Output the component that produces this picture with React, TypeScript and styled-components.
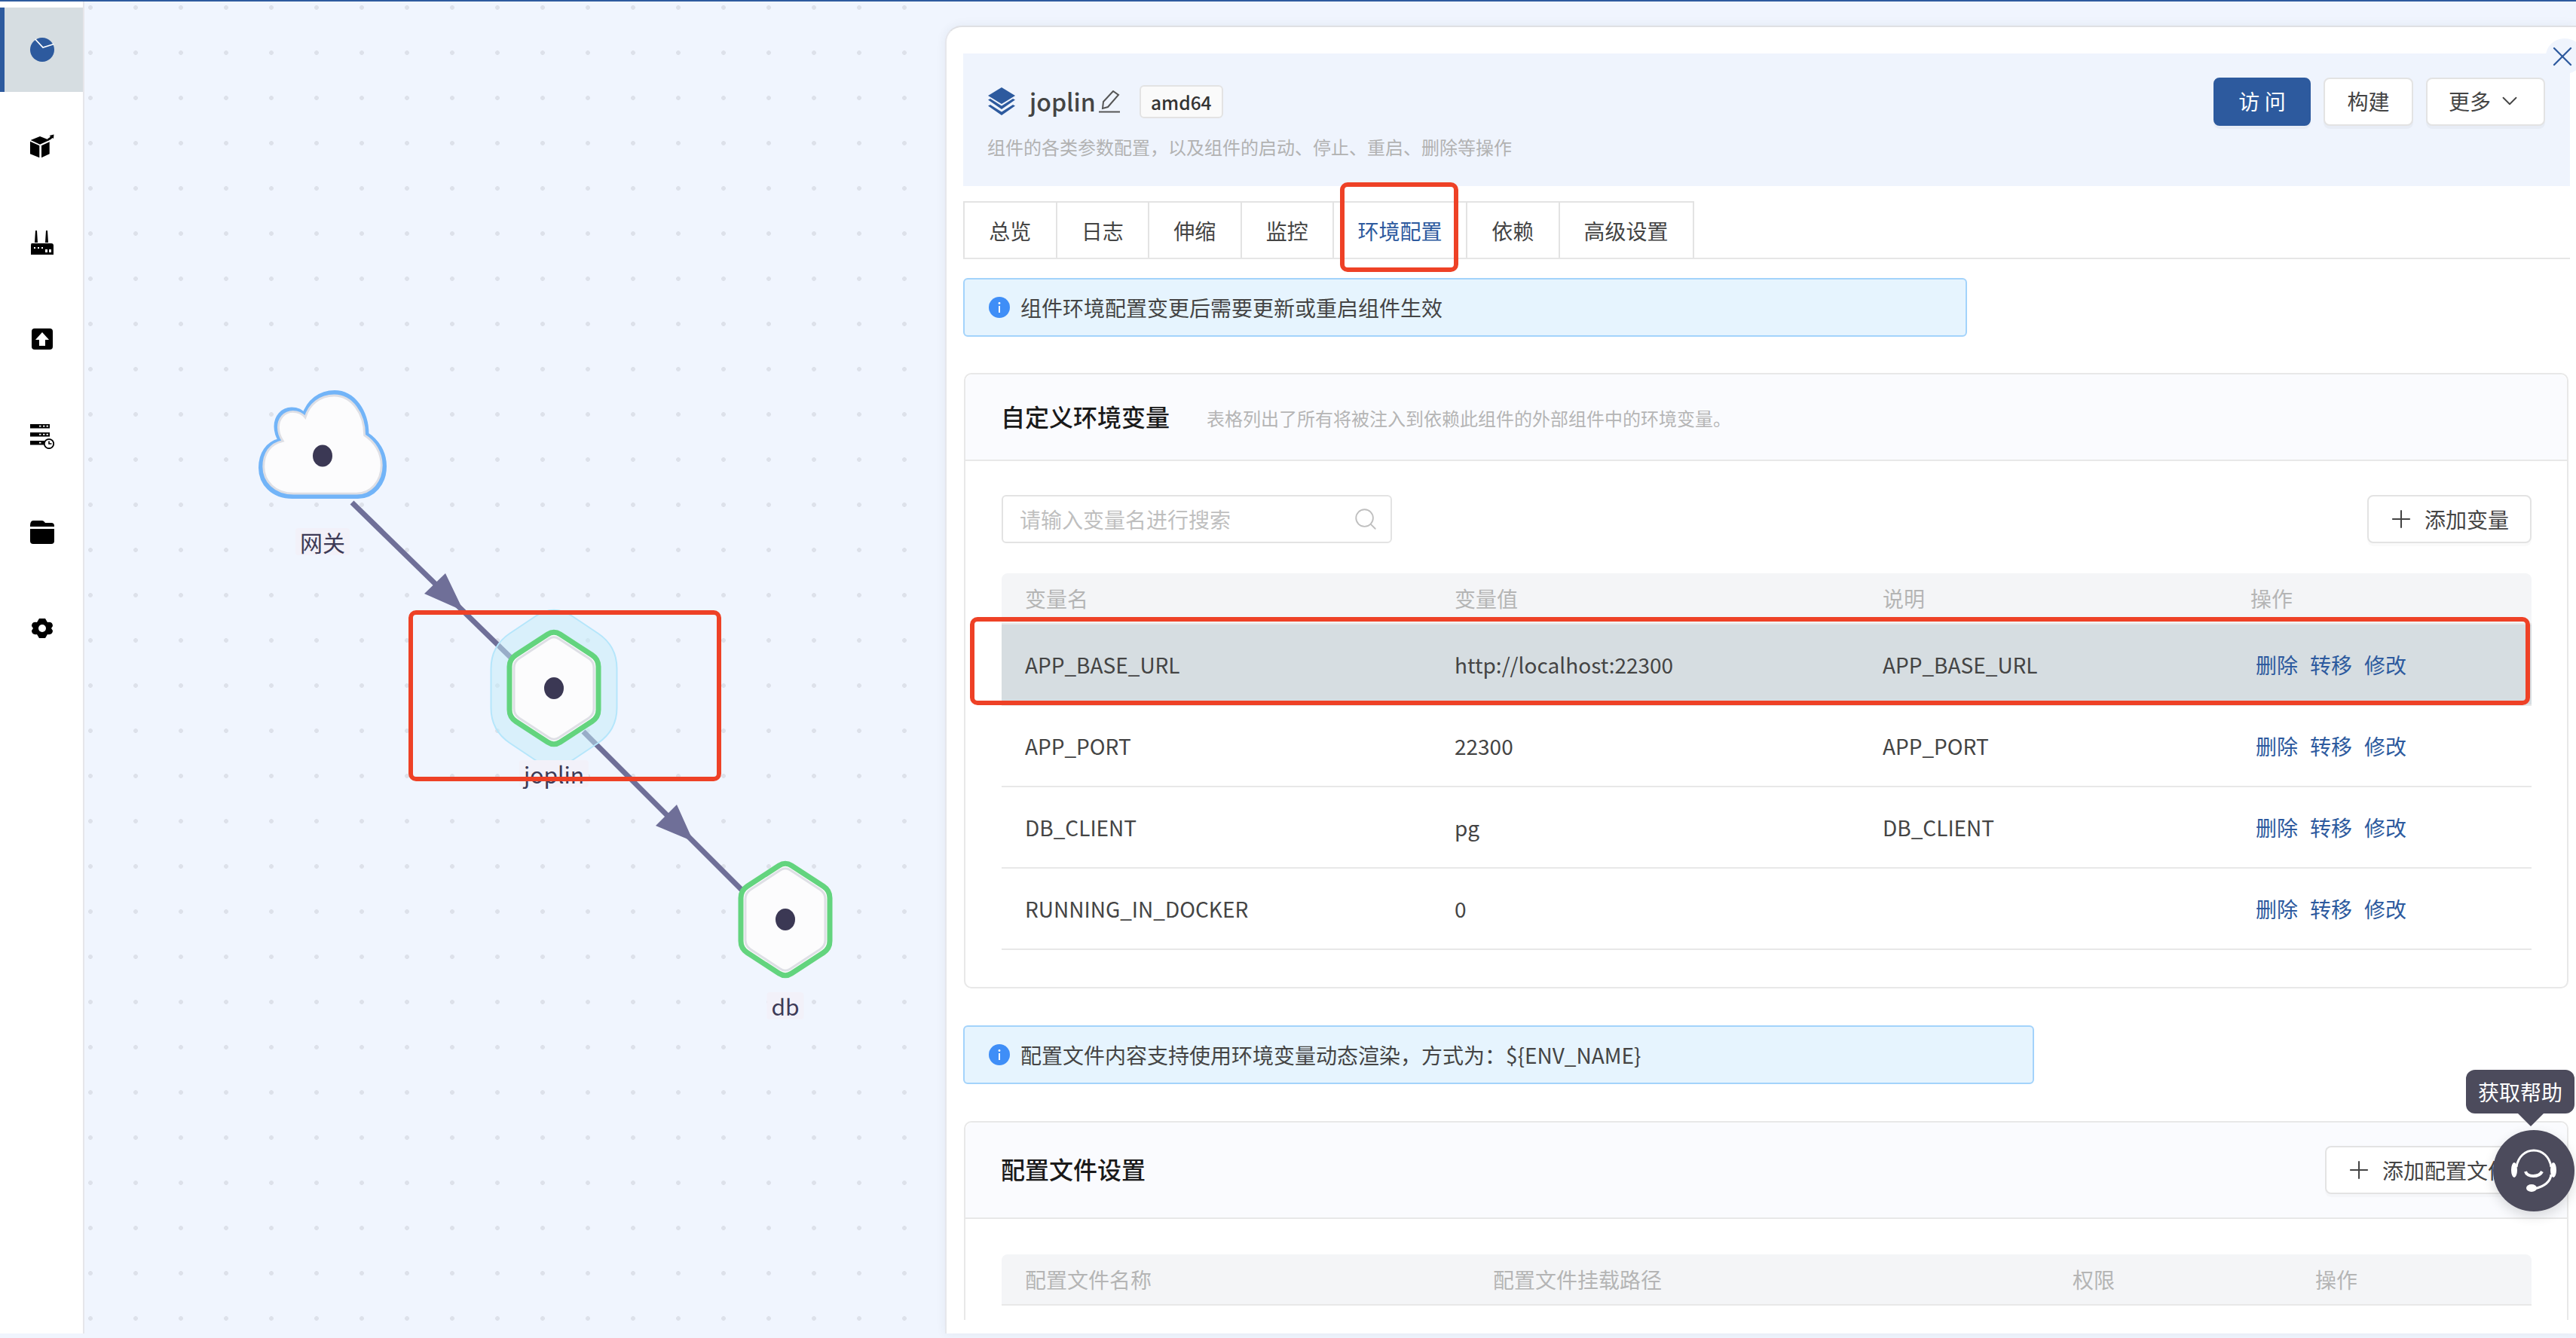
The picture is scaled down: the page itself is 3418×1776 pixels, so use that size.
import styled, { createGlobalStyle } from 'styled-components';
import { Search, Plus, ChevronDown, X } from 'lucide-react';

const FONT = '"Noto Sans CJK SC", "Noto Sans", sans-serif';
const BLUE = '#2d5a9e';

const GlobalStyle = createGlobalStyle`
  html, body { margin: 0; padding: 0; background: #f0f5fe; }
  body { font-family: ${FONT}; color: #444; }
  * { box-sizing: border-box; }
`;

const Page = styled.div`
  position: relative;
  width: 3418px;
  height: 1776px;
  overflow: hidden;
  display: flex;
  flex-direction: column;
  background: #f0f5fe;
`;

const TopLine = styled.div`
  height: 2px;
  flex-shrink: 0;
  background: ${BLUE};
`;

const Main = styled.div`
  flex: 1;
  display: flex;
  min-height: 0;
`;

const Sidebar = styled.nav`
  width: 112px;
  flex-shrink: 0;
  height: 1768px;
  padding-top: 8px;
  background: #fff;
  border-right: 2px solid #e6e6ea;
  display: flex;
  flex-direction: column;
  gap: 16px;
`;

const NavItem = styled.div<{ $active?: boolean }>`
  height: 112px;
  display: flex;
  align-items: center;
  justify-content: center;
  padding-right: 4px;
  background: ${(p) => (p.$active ? '#d6dde1' : 'transparent')};
  border-left: 6px solid ${(p) => (p.$active ? BLUE : 'transparent')};
  color: ${(p) => (p.$active ? BLUE : '#000')};
`;

const Canvas = styled.div`
  position: relative;
  flex: 1;
  background-image: radial-gradient(circle at center, #dde1ea 2.6px, transparent 3.2px);
  background-size: 60px 60px;
  background-position: 38px -22px;
`;

const GraphSvg = styled.svg`
  position: absolute;
  left: 0;
  top: 0;
  width: 100%;
  height: 100%;
  overflow: visible;
`;

const NodeLabel = styled.div<{ $x: number; $y: number }>`
  position: absolute;
  left: ${(p) => p.$x - 112}px;
  top: ${(p) => p.$y - 2}px;
  transform: translateX(-50%);
  height: 36px;
  padding: 0 6px;
  border-radius: 4px;
  background: #f2f1f9;
  color: #3d3a56;
  font-size: 30px;
  line-height: 36px;
`;

const Panel = styled.section`
  width: 2164px;
  height: 1736px;
  margin-top: 32px;
  flex-shrink: 0;
  padding: 35px 8px 18px 22px;
  background: #fff;
  border-top: 2px solid #dfe0e4;
  border-left: 2px solid #e6e7ec;
  border-top-left-radius: 22px;
  box-shadow: 0 0 14px rgba(40, 50, 80, 0.07);
`;

const PanelBody = styled.div`
  height: 100%;
  overflow: hidden;
`;

const Header = styled.header`
  height: 176px;
  padding: 32px 33px 0 32px;
  display: flex;
  justify-content: space-between;
  background: #eff4fd;
`;

const HeaderLeft = styled.div`
  padding-top: 10px;
`;

const TitleRow = styled.div`
  height: 44px;
  display: flex;
  align-items: center;
`;

const AppName = styled.span`
  margin: -3px 4px 0 18px;
  font-size: 32px;
  font-weight: 500;
  color: #444;
`;

const ArchTag = styled.span`
  margin-left: 26px;
  width: 111px;
  height: 44px;
  display: flex;
  align-items: center;
  justify-content: center;
  border: 2px solid #e3e3e3;
  border-radius: 6px;
  background: #fafafa;
  color: #333;
  font-size: 24.5px;
  font-weight: 500;
`;

const Desc = styled.div`
  margin-top: 20px;
  font-size: 24px;
  line-height: 36px;
  color: #b2b2b2;
`;

const Actions = styled.div`
  display: flex;
  gap: 17px;
`;

const Button = styled.div<{ $primary?: boolean; $width: number }>`
  width: ${(p) => p.$width}px;
  height: 64px;
  padding-bottom: 3px;
  display: flex;
  align-items: center;
  justify-content: center;
  gap: 8px;
  border-radius: 8px;
  border: 2px solid ${(p) => (p.$primary ? BLUE : '#e3e3e3')};
  background: ${(p) => (p.$primary ? BLUE : '#fff')};
  color: ${(p) => (p.$primary ? '#fff' : '#444')};
  font-size: 28px;
  box-shadow: 0 4px 0 rgba(0, 0, 0, 0.03);
  flex-shrink: 0;
`;

const CloseHalo = styled.div`
  position: absolute;
  left: 3378px;
  top: 51px;
  width: 50px;
  height: 47px;
  border-radius: 50%;
  background: #eff4fd;
  color: ${BLUE};
  display: flex;
  align-items: center;
`;

const Tabs = styled.div`
  margin-top: 20px;
  height: 77px;
  display: flex;
  border-bottom: 2px solid #e6e6e6;
`;

const Tab = styled.div<{ $active?: boolean; $last?: boolean }>`
  width: ${(p) => (p.$active ? 179 : p.$last ? 180 : 124.5)}px;
  flex-shrink: 0;
  display: flex;
  align-items: center;
  justify-content: center;
  border: 2px solid #e3e3e3;
  border-bottom: none;
  margin-right: -2px;
  font-size: 28px;
  color: ${(p) => (p.$active ? BLUE : '#444')};
`;

const Alert = styled.div<{ $width: number; $top: number }>`
  width: ${(p) => p.$width}px;
  height: 78px;
  margin-top: ${(p) => p.$top}px;
  padding-left: 32px;
  display: flex;
  align-items: center;
  gap: 14px;
  background: #e6f4fe;
  border: 2px solid #a3d3fb;
  border-radius: 6px;
  font-size: 28px;
  color: #444;
`;

const Card = styled.div<{ $top: number }>`
  margin: ${(p) => p.$top}px 2px 0 1px;
  border: 2px solid #e8e8e8;
  border-radius: 10px;
`;

const CardHead = styled.div<{ $height: number }>`
  height: ${(p) => p.$height}px;
  padding: 0 47px;
  display: flex;
  align-items: center;
  justify-content: space-between;
  background: #fafbfe;
  border-bottom: 2px solid #e8e8e8;
  border-radius: 10px 10px 0 0;
`;

const CardTitleBox = styled.div`
  display: flex;
  align-items: center;
  gap: 49px;
`;

const CardTitle = styled.div`
  margin-top: -4px;
  font-size: 32px;
  font-weight: 500;
  color: #1a1a1a;
`;

const CardSub = styled.div`
  margin-top: 2px;
  font-size: 24px;
  color: #b5b5b5;
`;

const CardBody = styled.div<{ $top: number }>`
  padding: ${(p) => p.$top}px 47px 49px 48px;
`;

const Toolbar = styled.div`
  height: 64px;
  margin-bottom: 40px;
  display: flex;
  justify-content: space-between;
`;

const SearchBox = styled.div`
  width: 518px;
  height: 64px;
  padding: 0 16px 0 22px;
  display: flex;
  align-items: center;
  justify-content: space-between;
  border: 2px solid #e3e3e3;
  border-radius: 6px;
  color: #bfbfbf;
  font-size: 28px;
`;

const AddButton = styled.div<{ $width: number }>`
  width: ${(p) => p.$width}px;
  height: 64px;
  padding-left: 24px;
  display: flex;
  align-items: center;
  gap: 12px;
  background: #fff;
  border: 2px solid #e3e3e3;
  border-radius: 8px;
  box-shadow: 0 4px 0 rgba(0, 0, 0, 0.02);
  font-size: 28px;
  color: #444;
`;

const HeadRow = styled.div<{ $cols: string }>`
  height: 68px;
  padding-left: 31px;
  display: grid;
  grid-template-columns: ${(p) => p.$cols};
  align-items: center;
  background: #f4f5f7;
  border-bottom: 2px solid #e8e8e8;
  border-radius: 8px 8px 0 0;
  font-size: 28px;
  color: #b5b5b5;
`;

const BodyRow = styled.div<{ $cols: string; $active?: boolean }>`
  height: 108px;
  padding-left: 31px;
  display: grid;
  grid-template-columns: ${(p) => p.$cols};
  align-items: center;
  background: ${(p) => (p.$active ? '#d6dde1' : '#fff')};
  border-bottom: 2px solid #e8e8e8;
  font-size: 28px;
  color: #444;
`;

const Links = styled.div`
  padding-left: 7px;
  display: flex;
  gap: 16px;
  color: ${BLUE};
`;

const Highlight = styled.div<{ $x: number; $y: number; $w: number; $h: number }>`
  position: absolute;
  left: ${(p) => p.$x}px;
  top: ${(p) => p.$y}px;
  width: ${(p) => p.$w}px;
  height: ${(p) => p.$h}px;
  border: 6px solid #ee4126;
  border-radius: 10px;
`;

const Tooltip = styled.div`
  position: absolute;
  left: 3272px;
  top: 1420px;
  width: 144px;
  height: 58px;
  display: flex;
  align-items: center;
  justify-content: center;
  background: #4c4b5c;
  border-radius: 12px;
  color: #fff;
  font-size: 28px;
  &::after {
    content: '';
    position: absolute;
    left: 69px;
    top: 58px;
    border-left: 17px solid transparent;
    border-right: 17px solid transparent;
    border-top: 17px solid #4c4b5c;
  }
`;

const HelpButton = styled.div`
  position: absolute;
  left: 3308px;
  top: 1500px;
  width: 108px;
  height: 108px;
  border-radius: 50%;
  display: flex;
  align-items: center;
  justify-content: center;
  background: #4c4b5c;
  box-shadow: 0 6px 16px rgba(0, 0, 0, 0.14);
`;

const PieIcon = () => (
  <svg width="32" height="32" viewBox="0 0 32 32">
    <circle cx="16" cy="16" r="16" fill="currentColor" />
    <path d="M6.7 2 L17 13 L31.5 8.5" fill="none" stroke="#fff" strokeWidth="1.8" />
  </svg>
);

const BoxIcon = () => (
  <svg width="32" height="32" viewBox="0 0 32 32" fill="currentColor">
    <path d="M0.7 8 L13 3 L25.7 8 L13 13.7 Z" />
    <path d="M0 9.7 L12.3 15.3 V31.3 L0 26.3 Z M15 15.3 L25.7 10.3 V26.3 L15 31.3 Z" />
    <path d="M23 6.3 Q26 5 27 3 L25.5 2 L31.5 0.5 L31 6 L29.5 5 Q28 7.5 24 8.5 Z" />
  </svg>
);

const RouterIcon = () => (
  <svg width="32" height="32" viewBox="0 0 32 32" fill="currentColor">
    <path d="M7 0 L9 0 L10 16 H6 Z M21 0 L23 0 L24 16 H20 Z" />
    <path d="M2 17 H28 Q31 17 31 20 V32 H1 V20 Q1 17 2 17 Z" />
    <path d="M5 22 H7 V24 H5 Z M10 22 H12 V24 H10 Z M15 22 H17 V24 H15 Z M20 25 H23 V29 H20 Z M25 25 H28 V29 H25 Z" fill="#fff" />
  </svg>
);

const UploadIcon = () => (
  <svg width="28" height="28" viewBox="0 0 28 28">
    <rect width="28" height="28" rx="4" fill="currentColor" />
    <path d="M14 5 L23 15 H18 V23 H10 V15 H5 Z" fill="#fff" />
  </svg>
);

const ServerIcon = () => (
  <svg width="32" height="36" viewBox="0 0 32 36">
    <g fill="currentColor">
      <rect x="0" y="3" width="26" height="5.5" />
      <rect x="0" y="14" width="26" height="5.5" />
      <rect x="0" y="25" width="22" height="5.5" />
    </g>
    <path d="M12 5.7 H14.5 M17 5.7 H19.5 M21.5 5.7 H24 M12 16.7 H14.5 M17 16.7 H19.5 M21.5 16.7 H24 M12 27.7 H14.5" stroke="#fff" strokeWidth="1.8" />
    <circle cx="25" cy="29" r="6.2" fill="#fff" stroke="currentColor" strokeWidth="1.8" />
    <path d="M25 25.5 V29 H28.5" fill="none" stroke="currentColor" strokeWidth="1.6" />
  </svg>
);

const FolderIcon = () => (
  <svg width="32" height="32" viewBox="0 0 32 32" fill="currentColor">
    <path d="M0 8 Q0 1 4 1 H16 Q18 1 20 4 H28 Q32 4 32 8 V9 H0 Z" />
    <path d="M0 12 H32 V28 Q32 32 28 32 H4 Q0 32 0 28 Z" />
  </svg>
);

const GearIcon = () => (
  <svg width="28" height="28" viewBox="0 0 28 28">
    <path
      fill="currentColor"
      d="M10 1 H18 L21 6 Q28 5 28 11 L26 14 L28 17 Q28 23 21 22 L18 27 H10 L7 22 Q0 23 0 17 L2 14 L0 11 Q0 5 7 6 Z"
    />
    <circle cx="14" cy="14" r="5" fill="#fff" />
  </svg>
);

const LayersIcon = () => (
  <svg width="38" height="38" viewBox="0 0 38 38" fill={BLUE}>
    <path d="M19 0 L37 11 L19 22 L1 11 Z" />
    <path d="M1 16.5 L4 15 L19 24.5 L34 15 L37 16.5 L19 29 Z" />
    <path d="M1 24.5 L4 23 L19 32.5 L34 23 L37 24.5 L19 37 Z" />
  </svg>
);

const EditIcon = () => (
  <svg width="28" height="30" viewBox="0 0 28 30" fill="none" stroke="#555" strokeWidth="2">
    <path d="M5 24 L6 15 L19 1 L26 6 L12 22 Z" />
    <path d="M0 28.5 H28" />
  </svg>
);

const InfoIcon = () => (
  <svg width="28" height="28" viewBox="0 0 28 28">
    <circle cx="14" cy="14" r="14" fill="#3f8ef7" />
    <path d="M14 12 V21" stroke="#fff" strokeWidth="2" />
    <circle cx="14" cy="8.5" r="1.4" fill="#fff" />
  </svg>
);

const HeadsetIcon = () => (
  <svg width="62" height="58" viewBox="0 0 62 58" fill="none" stroke="#fff" strokeWidth="3">
    <path d="M8 24 C10 10 20 2 31 2 C42 2 52 10 54 24" />
    <path d="M54 34 C53 44 44 50 32 53" />
    <path d="M20 30 C22 38 38 38 42 30" strokeWidth="4" />
    <ellipse cx="5" cy="28" rx="4" ry="10" fill="#fff" stroke="none" />
    <ellipse cx="57" cy="28" rx="4" ry="10" fill="#fff" stroke="none" />
    <ellipse cx="28" cy="52" rx="7" ry="5" fill="#fff" stroke="none" />
  </svg>
);

// corner-rounded polygon, used for the hexagon nodes
const roundedPath = (pts: number[][], r: number) => {
  const n = pts.length;
  let d = '';
  pts.forEach((p, i) => {
    const prev = pts[(i + n - 1) % n];
    const next = pts[(i + 1) % n];
    const toward = (q: number[]) => {
      const len = Math.hypot(q[0] - p[0], q[1] - p[1]);
      return [p[0] + ((q[0] - p[0]) * r) / len, p[1] + ((q[1] - p[1]) * r) / len];
    };
    const a = toward(prev);
    const b = toward(next);
    d += `${i === 0 ? 'M' : 'L'}${a[0]} ${a[1]} Q${p[0]} ${p[1]} ${b[0]} ${b[1]} `;
  });
  return d + 'Z';
};

const hexPath = (cx: number, cy: number, w: number, h: number, r: number) =>
  roundedPath(
    [
      [cx, cy - h],
      [cx + w, cy - h * 0.5],
      [cx + w, cy + h * 0.5],
      [cx, cy + h],
      [cx - w, cy + h * 0.5],
      [cx - w, cy - h * 0.5],
    ],
    r,
  );

const HexNode = ({ cx, cy }: { cx: number; cy: number }) => (
  <g>
    <path d={hexPath(cx, cy, 59, 77, 10)} fill="#fcfcfd" stroke="#63d47e" strokeWidth="7" />
    <path d={hexPath(cx, cy, 53, 70, 8)} fill="#fcfcfd" stroke="#dedfe5" strokeWidth="3" />
    <ellipse cx={cx} cy={cy} rx="13" ry="14.5" fill="#3b3854" />
  </g>
);

const CLOUD =
  'M388 655.5 H475 C495 655.5 509.5 638 509.5 616 C509.5 598 500 583 486 574 C486 543 468 518.5 444 518.5 C425 518.5 410 530 404 549 C400 544 394 541 387 541 C375 541 367 551 367 563 C367 570 369 576 373 582 C355 586 346.5 600 346.5 618 C346.5 638 362 655.5 388 655.5 Z';

const Graph = () => (
  <GraphSvg viewBox="112 2 1142 1768">
    <g stroke="#6f6f98" strokeWidth="7" fill="none">
      <path d="M467 664 L680 872" />
      <path d="M774 968 L984 1178" />
    </g>
    <path d="M615 808 L591 758 L563 785 Z M920 1114 L898 1065 L870 1093 Z" fill="#6f6f98" />
    <path d={CLOUD} fill="#fcfcfd" stroke="#72b4f8" strokeWidth="7" />
    <path
      d={CLOUD}
      fill="#fcfcfd"
      stroke="#dedfe5"
      strokeWidth="3"
      transform="translate(428 588) scale(0.96 0.95) translate(-428 -588)"
    />
    <ellipse cx="428" cy="602" rx="13" ry="14.5" fill="#3b3854" />
    <path d={hexPath(735, 910.5, 83.5, 112, 30)} fill="rgba(194,235,248,0.5)" stroke="#b5e6fb" strokeWidth="2" />
    <HexNode cx={735} cy={910.5} />
    <HexNode cx={1042} cy={1217.5} />
  </GraphSvg>
);

const navIcons = [PieIcon, BoxIcon, RouterIcon, UploadIcon, ServerIcon, FolderIcon, GearIcon];
const tabs = ['总览', '日志', '伸缩', '监控', '环境配置', '依赖', '高级设置'];

const ENV_COLS = '570px 568px 488px 1fr';
const FILE_COLS = '621px 769px 322px 1fr';

const envRows = [
  { name: 'APP_BASE_URL', value: 'http://localhost:22300', note: 'APP_BASE_URL' },
  { name: 'APP_PORT', value: '22300', note: 'APP_PORT' },
  { name: 'DB_CLIENT', value: 'pg', note: 'DB_CLIENT' },
  { name: 'RUNNING_IN_DOCKER', value: '0', note: '' },
];

export default function App() {
  return (
    <Page>
      <GlobalStyle />
      <TopLine />
      <Main>
        <Sidebar>
          {navIcons.map((Icon, i) => (
            <NavItem key={i} $active={i === 0}>
              <Icon />
            </NavItem>
          ))}
        </Sidebar>
        <Canvas>
          <Graph />
          <NodeLabel $x={428} $y={701}>网关</NodeLabel>
          <NodeLabel $x={735} $y={1009}>joplin</NodeLabel>
          <NodeLabel $x={1042} $y={1317}>db</NodeLabel>
        </Canvas>
        <Panel>
          <PanelBody>
            <Header>
              <HeaderLeft>
                <TitleRow>
                  <LayersIcon />
                  <AppName>joplin</AppName>
                  <EditIcon />
                  <ArchTag>amd64</ArchTag>
                </TitleRow>
                <Desc>组件的各类参数配置，以及组件的启动、停止、重启、删除等操作</Desc>
              </HeaderLeft>
              <Actions>
                <Button $primary $width={129}>访 问</Button>
                <Button $width={119}>构建</Button>
                <Button $width={158}>
                  更多
                  <ChevronDown size={34} strokeWidth={1.3} />
                </Button>
              </Actions>
            </Header>
            <Tabs>
              {tabs.map((t, i) => (
                <Tab key={t} $active={i === 4} $last={i === 6}>{t}</Tab>
              ))}
            </Tabs>
            <Alert $width={1332} $top={25}>
              <InfoIcon />
              组件环境配置变更后需要更新或重启组件生效
            </Alert>
            <Card $top={48}>
              <CardHead $height={115}>
                <CardTitleBox>
                  <CardTitle>自定义环境变量</CardTitle>
                  <CardSub>表格列出了所有将被注入到依赖此组件的外部组件中的环境变量。</CardSub>
                </CardTitleBox>
              </CardHead>
              <CardBody $top={45}>
                <Toolbar>
                  <SearchBox>
                    请输入变量名进行搜索
                    <Search size={34} strokeWidth={1.3} />
                  </SearchBox>
                  <AddButton $width={218}>
                    <Plus size={38} strokeWidth={1.3} />
                    添加变量
                  </AddButton>
                </Toolbar>
                <HeadRow $cols={ENV_COLS}>
                  <span>变量名</span>
                  <span>变量值</span>
                  <span>说明</span>
                  <span>操作</span>
                </HeadRow>
                {envRows.map((r, i) => (
                  <BodyRow key={r.name} $cols={ENV_COLS} $active={i === 0}>
                    <span>{r.name}</span>
                    <span>{r.value}</span>
                    <span>{r.note}</span>
                    <Links>
                      <span>删除</span>
                      <span>转移</span>
                      <span>修改</span>
                    </Links>
                  </BodyRow>
                ))}
              </CardBody>
            </Card>
            <Alert $width={1421} $top={49}>
              <InfoIcon />
              配置文件内容支持使用环境变量动态渲染，方式为：{'${ENV_NAME}'}
            </Alert>
            <Card $top={49}>
              <CardHead $height={128}>
                <CardTitle>配置文件设置</CardTitle>
                <AddButton $width={274}>
                  <Plus size={38} strokeWidth={1.3} />
                  添加配置文件
                </AddButton>
              </CardHead>
              <CardBody $top={47}>
                <HeadRow $cols={FILE_COLS}>
                  <span>配置文件名称</span>
                  <span>配置文件挂载路径</span>
                  <span>权限</span>
                  <span>操作</span>
                </HeadRow>
              </CardBody>
            </Card>
          </PanelBody>
        </Panel>
      </Main>
      <Highlight $x={542} $y={810} $w={415} $h={227} />
      <Highlight $x={1778} $y={242} $w={157} $h={119} />
      <Highlight $x={1287} $y={819} $w={2070} $h={117} />
      <CloseHalo>
        <X size={44} strokeWidth={1.3} />
      </CloseHalo>
      <Tooltip>获取帮助</Tooltip>
      <HelpButton>
        <HeadsetIcon />
      </HelpButton>
    </Page>
  );
}
